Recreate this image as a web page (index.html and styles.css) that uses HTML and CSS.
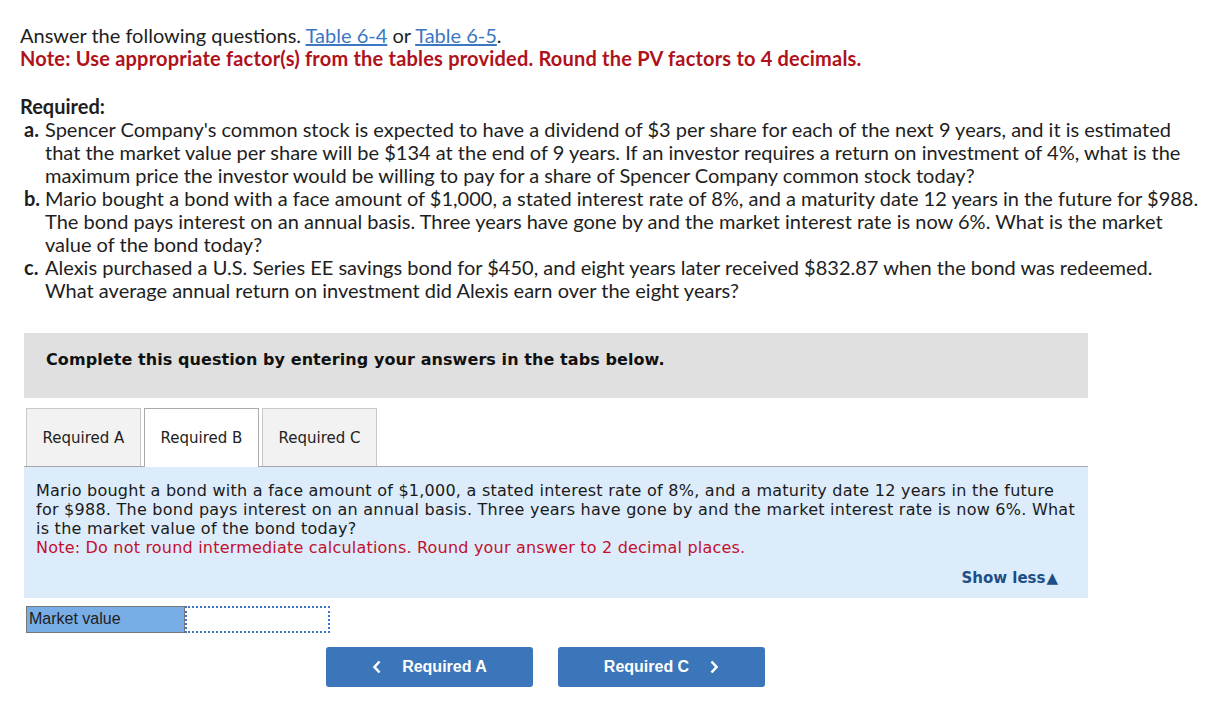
FILE: index.html
```html
<!DOCTYPE html>
<html>
<head>
<meta charset="utf-8">
<link rel="stylesheet" href="styles.css">
</head>
<body>
<div class="page">
  <div class="intro">
    <p class="lead">Answer the following questions. <a href="#">Table 6-4</a> or <a href="#">Table 6-5</a>.</p>
    <p class="note">Note: Use appropriate factor(s) from the tables provided. Round the PV factors to 4 decimals.</p>
  </div>
  <div class="required">
    <p class="req-title">Required:</p>
    <ol class="req-list">
      <li><span class="mark">a.</span><span class="txt">Spencer Company's common stock is expected to have a dividend of $3 per share for each of the next 9 years, and it is estimated that the market value per share will be $134 at the end of 9 years. If an investor requires a return on investment of 4%, what is the maximum price the investor would be willing to pay for a share of Spencer Company common stock today?</span></li>
      <li><span class="mark">b.</span><span class="txt">Mario bought a bond with a face amount of $1,000, a stated interest rate of 8%, and a maturity date 12 years in the future for $988. The bond pays interest on an annual basis. Three years have gone by and the market interest rate is now 6%. What is the market value of the bond today?</span></li>
      <li><span class="mark">c.</span><span class="txt">Alexis purchased a U.S. Series EE savings bond for $450, and eight years later received $832.87 when the bond was redeemed. What average annual return on investment did Alexis earn over the eight years?</span></li>
    </ol>
  </div>

  <div class="banner">Complete this question by entering your answers in the tabs below.</div>

  <div class="tabs">
    <div class="tab">Required A</div>
    <div class="tab active">Required B</div>
    <div class="tab">Required C</div>
  </div>
  <div class="panel">
    <p class="panel-text">Mario bought a bond with a face amount of $1,000, a stated interest rate of 8%, and a maturity date 12 years in the future for $988. The bond pays interest on an annual basis. Three years have gone by and the market interest rate is now 6%. What is the market value of the bond today?</p>
    <p class="panel-note">Note: Do not round intermediate calculations. Round your answer to 2 decimal places.</p>
    <div class="show-row"><span class="show-less">Show less<span class="tri">▲</span></span></div>
  </div>

  <div class="answer-row">
    <div class="ans-label">Market value</div>
    <div class="ans-input"></div>
  </div>

  <div class="nav">
    <button class="btn"><svg class="chev" width="10" height="14" viewBox="0 0 10 14"><polyline points="7.5,1.5 2.5,7 7.5,12.5" fill="none" stroke="#fff" stroke-width="2.6"/></svg>Required A</button>
    <button class="btn">Required C<svg class="chev right" width="10" height="14" viewBox="0 0 10 14"><polyline points="2.5,1.5 7.5,7 2.5,12.5" fill="none" stroke="#fff" stroke-width="2.6"/></svg></button>
  </div>
</div>
</body>
</html>
```

FILE: styles.css
```css
html, body { margin: 0; padding: 0; background: #fff; }
.page {
  padding: 24px 0 0 20px;
  width: 1181px;
  font-family: Lato, "Liberation Sans", sans-serif;
  color: #1e1e1e;
}
p { margin: 0; }
.intro { font-size: 20px; line-height: 23px; }
.lead a { color: #3b77c2; text-decoration: underline; }
.note { color: #b0121b; font-weight: bold; letter-spacing: 0.2px; }
.required { margin-top: 25px; font-size: 20px; line-height: 23px; }
.req-title { font-weight: bold; }
.req-list { list-style: none; margin: 0; padding: 0 0 0 4px; }
.req-list li { display: flex; }
.mark { font-weight: bold; width: 21px; flex: none; }
.txt { flex: 1; }

.banner {
  margin: 31px 0 0 4px;
  width: 1064px;
  height: 65px;
  box-sizing: border-box;
  background: #e0e0e0;
  padding: 17px 22px;
  font-family: "DejaVu Sans", Verdana, sans-serif;
  font-weight: bold;
  font-size: 16px;
  line-height: 19px;
  letter-spacing: 0.08px;
  color: #111;
}
.tabs { display: flex; gap: 3px; margin: 10px 0 0 6px; height: 58px; }
.tab {
  width: 115px;
  box-sizing: border-box;
  border: 1px solid #c8c8c8;
  border-bottom: none;
  background: #f2f2f2;
  display: flex; align-items: center; justify-content: center;
  font-family: "DejaVu Sans", Verdana, sans-serif;
  font-size: 15px;
  color: #222;
}
.tab.active { background: #fff; border-color: #aaa; position: relative; z-index: 1; height: 59px; }
.panel {
  margin-left: 4px;
  width: 1064px;
  box-sizing: border-box;
  background: #dcecfa;
  border-top: 1px solid #a9a9a9;
  padding: 14px 10px 10px 12px;
  font-family: "DejaVu Sans", Verdana, sans-serif;
  font-size: 16px;
  line-height: 19px;
  color: #1a1a1a;
}
.panel-text { letter-spacing: 0.25px; }
.panel-note { color: #c2102e; letter-spacing: 0.2px; }
.show-row { display: flex; justify-content: flex-end; margin-top: 12px; padding-right: 20px; }
.show-less { font-weight: bold; font-size: 15px; color: #1c4f86; }
.tri { font-size: 15px; margin-left: 1px; }

.answer-row { display: flex; margin: 8px 0 0 6px; height: 27px; }
.ans-label {
  width: 159px;
  box-sizing: border-box;
  background: #78ade5;
  border: 1px solid #777;
  font-family: "Liberation Sans", Arial, sans-serif;
  font-size: 16px;
  color: #1e1e1e;
  padding: 3px 0 0 2px;
}
.ans-input {
  width: 145px;
  box-sizing: border-box;
  border: 2px dotted #3b77c2;
  background: #fff;
}
.nav { display: flex; gap: 25px; margin: 14px 0 0 306px; }
.btn {
  width: 207px; height: 40px;
  border: none; border-radius: 3px;
  background: #3a76b9;
  color: #fff;
  font-family: "Liberation Sans", Arial, sans-serif;
  font-weight: bold;
  font-size: 16px;
  display: flex; align-items: center; justify-content: center;
  padding: 0;
}
.chev { margin-right: 20px; }
.chev.right { margin-right: 0; margin-left: 20px; }
```
